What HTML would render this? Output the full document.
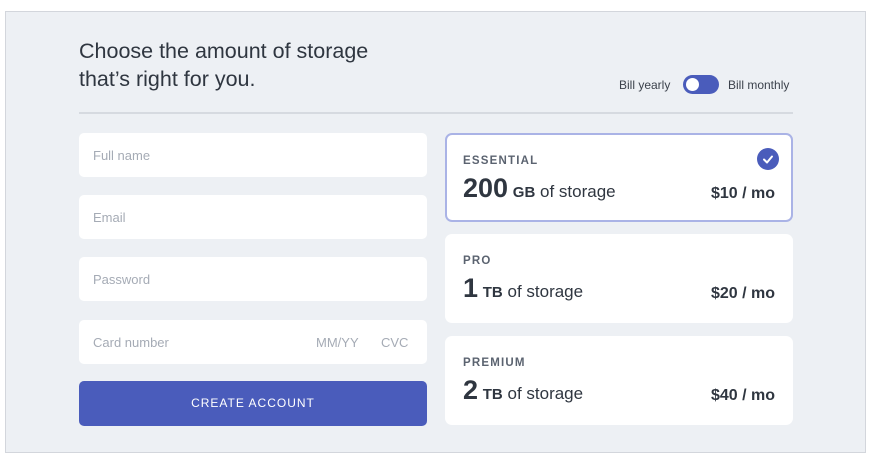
<!DOCTYPE html>
<html><head><style>
*{margin:0;padding:0;box-sizing:border-box}
body{width:878px;height:463px;background:#fff;font-family:"Liberation Sans",sans-serif;position:relative;overflow:hidden}
.panel{position:absolute;left:5px;top:11px;width:861px;height:442px;background:#edf0f4;border:1px solid #d3d6dc}
h1{position:absolute;left:79px;top:37px;font-weight:normal;font-size:21.5px;line-height:28px;color:#2f3640}
.line{position:absolute;left:79px;top:112px;width:714px;height:2px;background:#d6dae0}
.in{position:absolute;left:79px;width:348px;height:44px;background:#fff;border-radius:5px;font-size:13px;color:#a5abb5;line-height:46px;padding-left:14px}
.btn{position:absolute;left:79px;top:381px;width:348px;height:45px;background:#4a5cbb;border-radius:5px;color:#fff;font-size:12px;letter-spacing:1px;text-align:center;line-height:45px}
.card{position:absolute;left:445px;width:348px;background:#fff;border-radius:7px}
.lab{position:absolute;left:18px;font-size:11.5px;font-weight:bold;color:#5b6370;letter-spacing:1.2px}
.big{position:absolute;left:18px;font-size:17px;color:#2f3640}
.big b.n{font-size:27px;font-weight:bold}
.big b.u{font-size:15px}
.pr{position:absolute;right:18px;font-size:16px;font-weight:bold;color:#2f3640}
.tog{position:absolute;left:683px;top:75px;width:36px;height:19px;border-radius:10px;background:#4a5cbb}
.tog:after{content:"";position:absolute;left:3px;top:3px;width:13px;height:13px;border-radius:50%;background:#fff}
.t{position:absolute;top:78px;font-size:12px;color:#3c424c}
</style></head><body>
<div class="panel"></div>
<h1>Choose the amount of storage<br>that’s right for you.</h1>
<div class="t" style="left:619px">Bill yearly</div>
<div class="tog"></div>
<div class="t" style="left:728px">Bill monthly</div>
<div class="line"></div>
<div class="in" style="top:133px">Full name</div>
<div class="in" style="top:195px">Email</div>
<div class="in" style="top:257px">Password</div>
<div class="in" style="top:320px">Card number<span style="position:absolute;left:237px">MM/YY</span><span style="position:absolute;left:302px">CVC</span></div>
<div class="btn">CREATE ACCOUNT</div>
<div class="card" style="top:133px;height:89px;border:2px solid #aab3e6">
 <div class="lab" style="top:20px;left:16px">ESSENTIAL</div>
 <div style="position:absolute;right:12px;top:13px;width:22px;height:22px;border-radius:50%;background:#4a5cbb"><svg width="22" height="22"><path d="M7 11.5l3 3 5-6" stroke="#fff" stroke-width="2" fill="none" stroke-linecap="round" stroke-linejoin="round"/></svg></div>
 <div class="big" style="top:38px;left:16px"><b class="n">200</b> <b class="u">GB</b> of storage</div>
 <div class="pr" style="top:50px;right:16px">$10 / mo</div>
</div>
<div class="card" style="top:234px;height:89px">
 <div class="lab" style="top:21px">PRO</div>
 <div class="big" style="top:39px"><b class="n">1</b> <b class="u">TB</b> of storage</div>
 <div class="pr" style="top:51px">$20 / mo</div>
</div>
<div class="card" style="top:336px;height:89px">
 <div class="lab" style="top:21px">PREMIUM</div>
 <div class="big" style="top:39px"><b class="n">2</b> <b class="u">TB</b> of storage</div>
 <div class="pr" style="top:51px">$40 / mo</div>
</div>
</body></html>
